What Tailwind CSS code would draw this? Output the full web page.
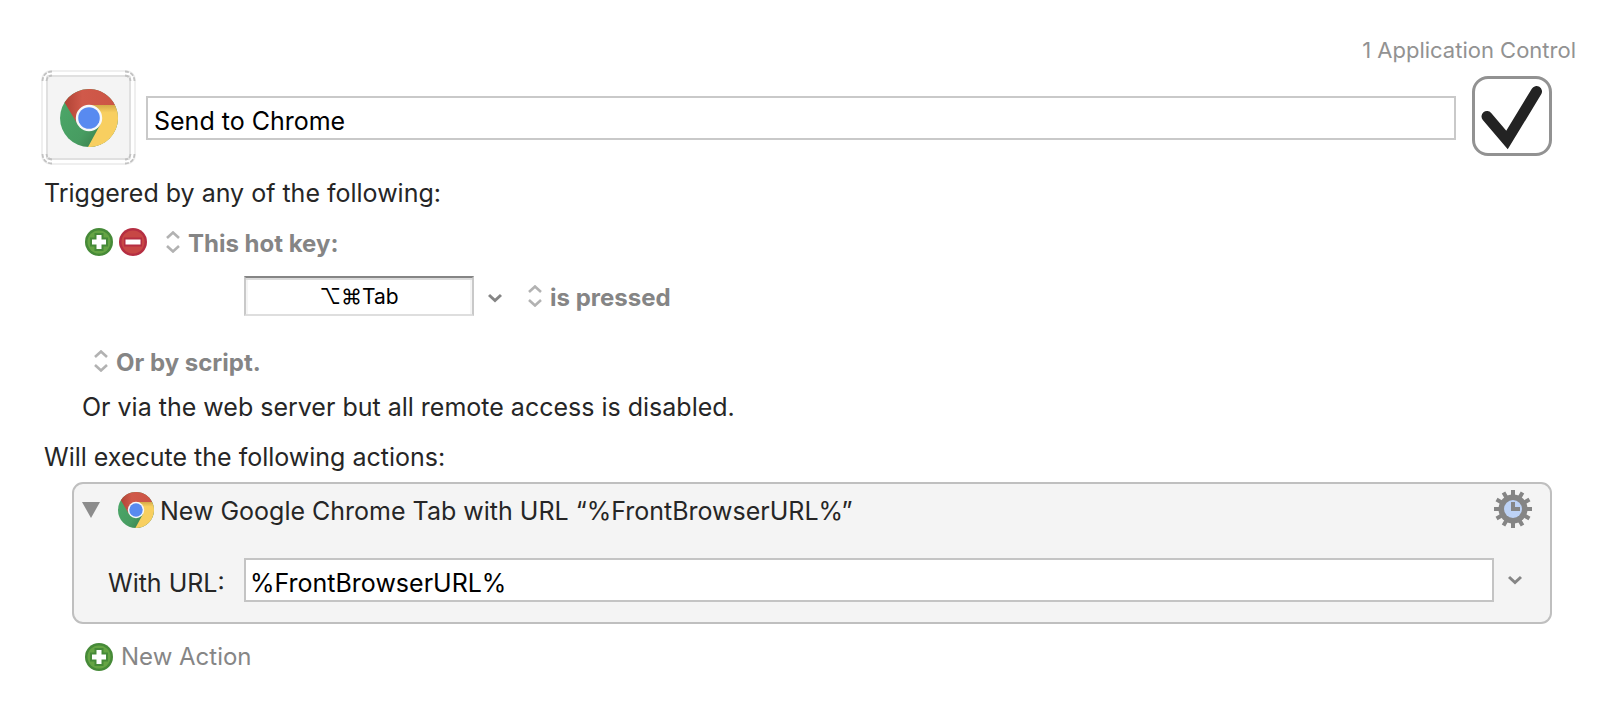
<!DOCTYPE html>
<html lang="en">
<head>
<meta charset="utf-8">
<meta name="viewport" content="width=device-width, initial-scale=1">
<title>Send to Chrome</title>
<script src="https://cdn.jsdelivr.net/npm/@tailwindcss/browser@4"></script>
</head>
<body class="bg-white font-['Inter','DejaVu_Sans',sans-serif] text-[25px] leading-8 text-[#262626]">
<svg class="absolute size-0" aria-hidden="true">
  <defs>
    <linearGradient id="redShade" x1="0" y1="0.3" x2="1" y2="0.3"><stop offset="0" stop-color="#b04335"/><stop offset=".35" stop-color="#d0594a"/><stop offset="1" stop-color="#cc5444"/></linearGradient>
    <linearGradient id="greenShade" x1="0" y1="0.3" x2=".8" y2=".9"><stop offset="0" stop-color="#4ba668"/><stop offset=".6" stop-color="#479c61"/><stop offset="1" stop-color="#387a49"/></linearGradient>
    <linearGradient id="yellowShade" x1="0" y1="0" x2="0" y2="1"><stop offset="0" stop-color="#d4aa48"/><stop offset=".18" stop-color="#f8cf60"/><stop offset="1" stop-color="#f8cf60"/></linearGradient>
    <symbol id="chrome" viewBox="0 0 58 58">
      <circle cx="29" cy="29" r="29" fill="url(#greenShade)"/>
      <path d="M29 16H54.9A29 29 0 0 1 28 58L40.3 35.5Z" fill="url(#yellowShade)"/>
      <path d="M4.6 13.4A29 29 0 0 1 54.9 16H29L17.7 35.5Z" fill="url(#redShade)"/>
      <circle cx="29" cy="29" r="13.2" fill="#f8f8f8"/>
      <circle cx="29" cy="29" r="10.8" fill="#588af0"/>
    </symbol>
    <symbol id="plus" viewBox="0 0 28 28">
      <circle cx="14" cy="14" r="14" fill="#468a38"/>
      <circle cx="14" cy="14" r="11.5" fill="#65a444"/>
      <path d="M9.5 5h9v4.5H23v9h-4.500V23h-9v-4.500H5v-9h4.500Z" fill="#468a38"/>
      <path d="M11.500 7h5v4.500H21v5h-4.500V21h-5v-4.500H7v-5h4.500Z" fill="#fff"/>
    </symbol>
    <symbol id="minus" viewBox="0 0 28 28">
      <circle cx="14" cy="14" r="14" fill="#b52e42"/>
      <circle cx="14" cy="14" r="11.5" fill="#c74745"/>
      <path d="M5 9.500h18v9H5Z" fill="#b52e42"/>
      <path d="M6.500 11.500h15v5h-15Z" fill="#fff"/>
    </symbol>
    <symbol id="updown" viewBox="0 0 14 22">
      <path d="M1 7L7 1.5L13 7M1 15L7 20.5L13 15" fill="none" stroke="#b2b2b2" stroke-width="2.6"/>
    </symbol>
    <symbol id="down" viewBox="0 0 14 10">
      <path d="M1 2L7 7.5L13 2" fill="none" stroke="#858585" stroke-width="3"/>
    </symbol>
  </defs>
</svg>
<main class="pt-[34px] pr-[62px] pb-9 pl-[41px]">
  <p class="-mr-6 text-right text-[22px] text-[#929292]">1 Application Control</p>

  <header class="mt-1 flex items-center">
    <button type="button" aria-label="Macro icon" class="relative flex size-[95px] shrink-0 items-center justify-center rounded-[10px] border-2 border-[#efefef] bg-white">
      <span class="flex size-[85px] items-center justify-center rounded-[3px] border-2 border-[#e0e0e0] bg-[#f4f4f4]">
        <svg class="size-[58px]" aria-hidden="true"><use href="#chrome"/></svg>
      </span>
      <svg class="absolute -inset-0.5 size-[95px]" viewBox="0 0 95 95" fill="none" stroke="#c2c2c2" stroke-width="1.8" stroke-dasharray="4 1.5" aria-hidden="true">
        <path d="M1.500 11Q2 2 11 1.500M84 1.500Q93 2 93.500 11M93.500 84Q93 93 84 93.500M11 93.500Q2 93 1.500 84"/>
        <path d="M5.500 11Q6 6 11 5.500M84 5.500Q89 6 89.500 11M89.500 84Q89 89 84 89.500M11 89.500Q6 89 5.500 84"/>
      </svg>
    </button>
    <input type="text" aria-label="Macro name" value="Send to Chrome" class="ml-2.5 h-11 min-w-0 flex-1 border-2 border-[#c9c9c9] bg-white px-1.5 pt-1.5 text-black outline-none">
    <span class="relative mb-1 ml-4 size-20 shrink-0">
      <input type="checkbox" checked aria-label="Macro enabled" class="peer block size-20 appearance-none rounded-2xl border-3 border-[#929292] bg-white">
      <svg class="pointer-events-none absolute inset-0 hidden size-20 peer-checked:block" viewBox="0 0 80 80" fill="none" stroke="#232323" stroke-width="11" stroke-linecap="round" aria-hidden="true"><path d="M15 40.500L35 64L64.500 15.500"/></svg>
    </span>
  </header>

  <h2 class="mt-3 ml-[3px]">Triggered by any of the following:</h2>

  <div class="mt-[17px] ml-11 flex items-center">
    <button type="button" aria-label="Add trigger"><svg class="size-7"><use href="#plus"/></svg></button>
    <button type="button" aria-label="Remove trigger" class="ml-1.5"><svg class="size-7"><use href="#minus"/></svg></button>
    <label class="ml-[19px] flex items-center gap-2">
      <svg class="h-[22px] w-3.5" aria-hidden="true"><use href="#updown"/></svg>
      <select aria-label="Trigger type" class="h-8 appearance-none pt-[3px] text-2xl/7 font-bold text-[#858585] outline-none"><option>This hot key:</option></select>
    </label>
  </div>

  <div class="mt-[18px] ml-[203px] flex items-center">
    <input type="text" aria-label="Hot key" value="⌥⌘Tab" class="h-10 w-[230px] border-2 border-t-[#858585] border-r-[#c9c9c9] border-b-[#dedede] border-l-[#c9c9c9] bg-white text-center text-[21px] text-black shadow-[inset_0_2px_0_#dcdcdc,inset_2px_0_0_#f5f5f5,inset_-2px_0_0_#f5f5f5] outline-none">
    <button type="button" aria-label="Hot key options" class="mt-1 ml-3.5"><svg class="h-2.5 w-3.5"><use href="#down"/></svg></button>
    <label class="ml-[26px] flex items-center gap-2">
      <svg class="h-[22px] w-3.5" aria-hidden="true"><use href="#updown"/></svg>
      <select aria-label="Key event" class="h-8 appearance-none pt-[3px] text-2xl/7 font-bold text-[#858585] outline-none"><option>is pressed</option></select>
    </label>
  </div>

  <label class="mt-[29px] ml-[53px] flex items-center gap-2">
    <svg class="h-[22px] w-3.5" aria-hidden="true"><use href="#updown"/></svg>
    <select aria-label="Script trigger" class="h-8 appearance-none pt-[3px] text-2xl/7 font-bold text-[#858585] outline-none"><option>Or by script.</option></select>
  </label>

  <p class="mt-3.5 ml-[41px]">Or via the web server but all remote access is disabled.</p>

  <h2 class="mt-[18px] ml-[3px]">Will execute the following actions:</h2>

  <section class="mt-[9px] ml-[31px] rounded-[11px] border-2 border-[#bfbfbf] bg-[#f4f4f4] pt-1.5 pb-5">
    <div class="flex h-10 items-center pr-[18px] pl-2">
      <button type="button" aria-label="Collapse action"><svg class="h-4 w-[18px]" viewBox="0 0 18 16"><path d="M0 0H18L9 16Z" fill="#8c8c8c"/></svg></button>
      <svg class="ml-[18px] size-9" aria-hidden="true"><use href="#chrome"/></svg>
      <h3 class="ml-1.5 flex-1 pt-0.5">New Google Chrome Tab with URL “%FrontBrowserURL%”</h3>
      <button type="button" aria-label="Action options" class="mb-0.5">
        <svg class="size-[38px]" viewBox="-19 -19 38 38">
          <g stroke="#858585" stroke-width="4">
            <path d="M0-19V19M-19 0H19"/>
            <path d="M0-19V19M-19 0H19" transform="rotate(30)"/>
            <path d="M0-19V19M-19 0H19" transform="rotate(60)"/>
          </g>
          <circle r="14.500" fill="#858585"/>
          <circle r="9" fill="#bdd2f5"/>
          <path d="M0-7V0H7" fill="none" stroke="#858585" stroke-width="4"/>
        </svg>
      </button>
    </div>
    <div class="mt-7 flex items-center pr-7 pl-[34px]">
      <label for="url" class="w-[136px] pt-1.5">With URL:</label>
      <input id="url" type="text" value="%FrontBrowserURL%" class="h-11 min-w-0 flex-1 border-2 border-[#c4c4c4] bg-white pt-1.5 pr-1.5 pl-1 text-black outline-none">
      <button type="button" aria-label="URL options" class="ml-3.5"><svg class="h-2.5 w-3.5"><use href="#down"/></svg></button>
    </div>
  </section>

  <button type="button" class="mt-[17px] ml-11 flex items-center gap-2 text-2xl/8 text-[#868686]">
    <svg class="size-7" aria-hidden="true"><use href="#plus"/></svg>
    New Action
  </button>
</main>
</body>
</html>
